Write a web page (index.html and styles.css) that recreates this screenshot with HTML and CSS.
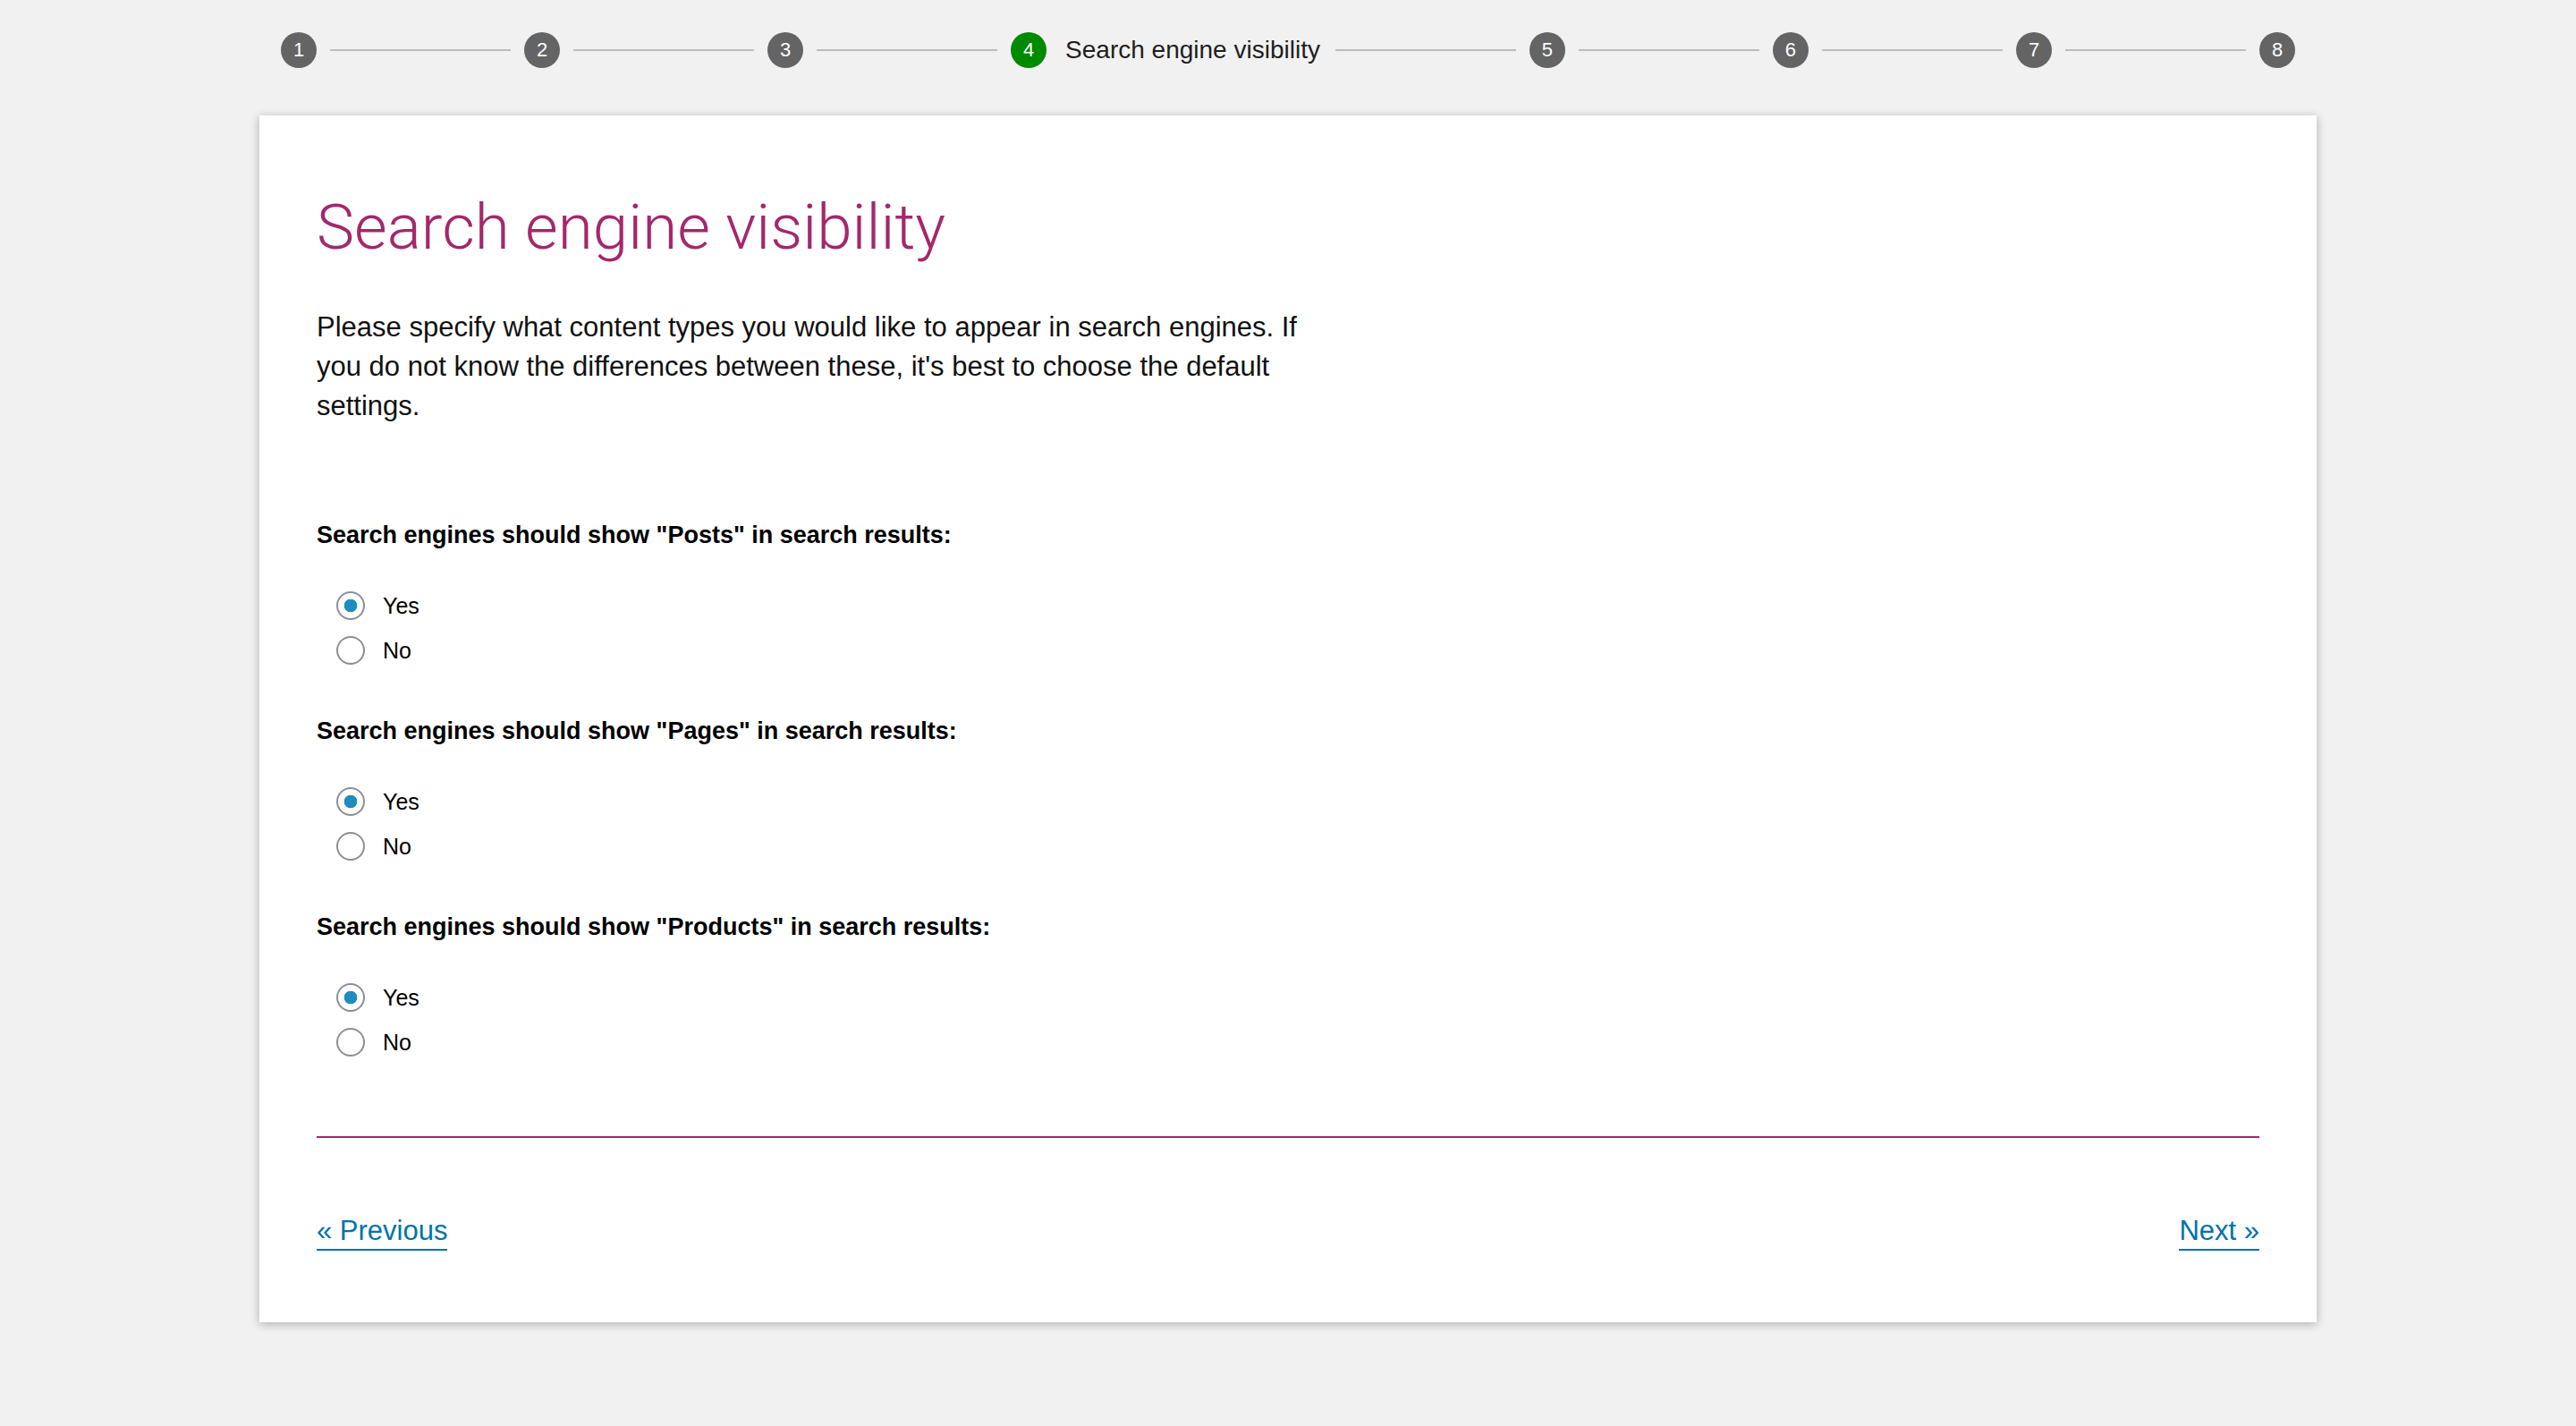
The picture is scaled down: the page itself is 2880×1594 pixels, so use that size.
FILE: index.html
```html
<!DOCTYPE html>
<html lang="en">
<head>
<meta charset="utf-8">
<title>Search engine visibility</title>
<link rel="stylesheet" href="styles.css">
</head>
<body>
<div class="wizard">
  <ol class="stepper">
    <li class="step"><span class="num">1</span></li>
    <li class="line"></li>
    <li class="step"><span class="num">2</span></li>
    <li class="line"></li>
    <li class="step"><span class="num">3</span></li>
    <li class="line"></li>
    <li class="step active"><span class="num">4</span><span class="step-label">Search engine visibility</span></li>
    <li class="line after-label"></li>
    <li class="step"><span class="num">5</span></li>
    <li class="line"></li>
    <li class="step"><span class="num">6</span></li>
    <li class="line"></li>
    <li class="step"><span class="num">7</span></li>
    <li class="line"></li>
    <li class="step"><span class="num">8</span></li>
  </ol>

  <main class="card">
    <h1 class="title">Search engine visibility</h1>
    <p class="intro">Please specify what content types you would like to appear in search engines. If you do not know the differences between these, it's best to choose the default settings.</p>

    <div class="group">
      <p class="question">Search engines should show "Posts" in search results:</p>
      <div class="options">
        <label class="option"><input type="radio" name="posts" checked><span>Yes</span></label>
        <label class="option"><input type="radio" name="posts"><span>No</span></label>
      </div>
    </div>

    <div class="group">
      <p class="question">Search engines should show "Pages" in search results:</p>
      <div class="options">
        <label class="option"><input type="radio" name="pages" checked><span>Yes</span></label>
        <label class="option"><input type="radio" name="pages"><span>No</span></label>
      </div>
    </div>

    <div class="group">
      <p class="question">Search engines should show "Products" in search results:</p>
      <div class="options">
        <label class="option"><input type="radio" name="products" checked><span>Yes</span></label>
        <label class="option"><input type="radio" name="products"><span>No</span></label>
      </div>
    </div>

    <hr class="divider">

    <nav class="pager">
      <a class="pager-link" href="#">« Previous</a>
      <a class="pager-link" href="#">Next »</a>
    </nav>
  </main>
</div>
</body>
</html>
```

FILE: styles.css
```css
html, body {
  margin: 0;
  padding: 0;
}

body {
  background: #f1f1f1;
  font-family: "Liberation Sans", Arial, sans-serif;
  color: #1e1e1e;
  height: 1594px;
  overflow: hidden;
}

.wizard {
  width: 2300px;
  margin: 0 auto;
}

.stepper {
  list-style: none;
  margin: 0;
  padding: 36px 24px 0;
  height: 40px;
  display: flex;
  align-items: center;
}

.step {
  display: flex;
  align-items: center;
}

.num {
  width: 40px;
  height: 40px;
  border-radius: 50%;
  background: #646464;
  color: #fff;
  font-size: 22px;
  line-height: 1;
  display: flex;
  align-items: center;
  justify-content: center;
}

.step.active .num {
  background: #008a00;
}

.step-label {
  margin-left: 21px;
  font-size: 28px;
  line-height: 40px;
  color: #1e1e1e;
  white-space: nowrap;
}

.line {
  flex: 1;
  height: 2px;
  background: #bcbcbc;
  margin: 0 15px;
}

.line.after-label {
  margin-left: 17px;
}

.card {
  display: block;
  margin-top: 53px;
  background: #fff;
  box-shadow: 0 2px 10px rgba(0, 0, 0, 0.28);
  padding: 83px 64px 80px;
}

.title {
  margin: 0 0 48px;
  font-family: Roboto, "Liberation Sans", sans-serif;
  font-weight: 300;
  font-size: 71px;
  line-height: 84px;
  color: #a4286a;
}

.intro {
  margin: 0 0 104px;
  max-width: 1120px;
  font-size: 31px;
  line-height: 44px;
  color: #111;
}

.group {
  margin-bottom: 47px;
}

.group:last-of-type {
  margin-bottom: 0;
}

.question {
  margin: 0;
  font-size: 27px;
  line-height: 36px;
  font-weight: 700;
  color: #000;
}

.options {
  margin-top: 36px;
  padding-left: 22px;
  display: flex;
  flex-direction: column;
}

.option {
  height: 50px;
  display: flex;
  align-items: center;
  gap: 20px;
  font-size: 25px;
  color: #000;
}

.option input {
  appearance: none;
  -webkit-appearance: none;
  margin: 0;
  width: 32px;
  height: 32px;
  border: 2px solid #8c8f94;
  border-radius: 50%;
  background: #fff;
  box-sizing: border-box;
}

.option input:checked {
  background: radial-gradient(circle, #1e8cbe 0 7px, #fff 7.6px);
}

.divider {
  margin: 80px 0 84px;
  border: 0;
  height: 2px;
  background: #a4286a;
}

.pager {
  display: flex;
  justify-content: space-between;
  align-items: flex-start;
}

.pager-link {
  display: inline-block;
  font-size: 31px;
  line-height: 40px;
  color: #0073aa;
  text-decoration: none;
  border-bottom: 2px solid #0073aa;
}
```
